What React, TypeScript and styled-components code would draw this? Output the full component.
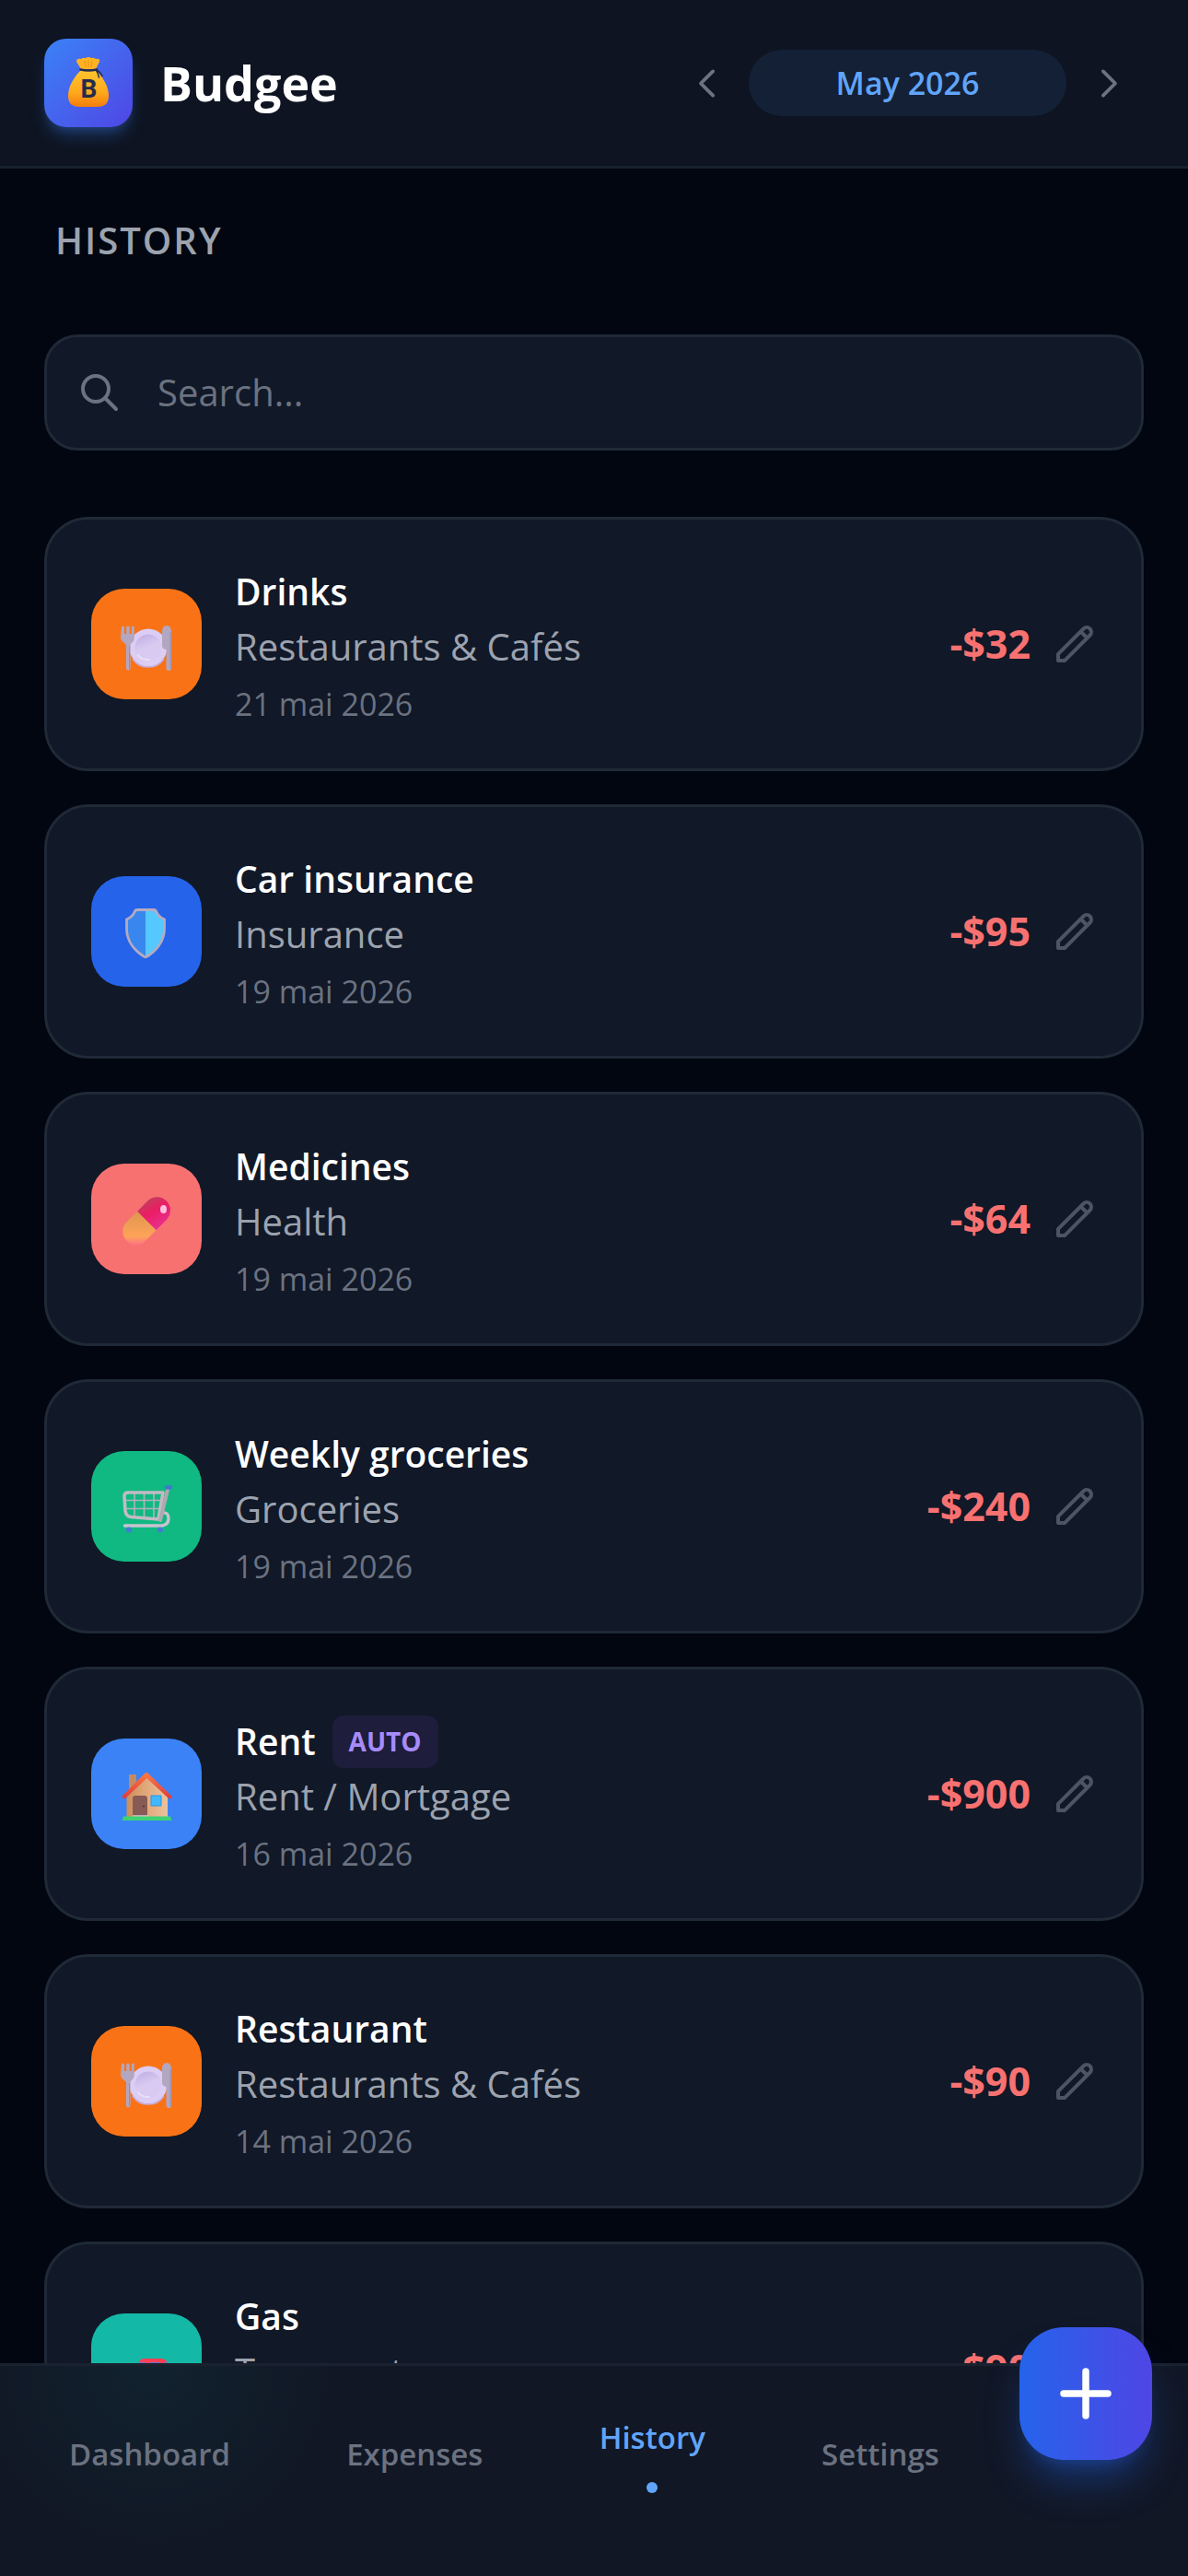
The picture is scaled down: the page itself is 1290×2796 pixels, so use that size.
import React from "react";
import styled, { createGlobalStyle } from "styled-components";

const GlobalStyle = createGlobalStyle`
  *, *::before, *::after { box-sizing: border-box; }
  body {
    margin: 0;
    background: #020610;
    color: #ffffff;
    font-family: "Segoe UI", "Open Sans", "Noto Sans", sans-serif;
  }
  button, input { font: inherit; color: inherit; }
  button { border: 0; padding: 0; background: none; cursor: pointer; }
`;

const Shell = styled.div`
  display: flex;
  flex-direction: column;
  height: 100vh;
`;

const Header = styled.header`
  display: flex;
  align-items: center;
  justify-content: space-between;
  flex: none;
  padding: 42px 48px;
  background: #0e1421;
  border-bottom: 3px solid #17202d;
`;

const Brand = styled.div`
  display: flex;
  align-items: center;
  gap: 30px;
`;

const Logo = styled.div`
  width: 96px;
  height: 96px;
  border-radius: 24px;
  background: linear-gradient(135deg, #3b82f6, #4f46e5);
  box-shadow: 0 12px 18px -3px rgba(59, 130, 246, 0.3),
    0 6px 12px -6px rgba(59, 130, 246, 0.3);
`;

const BrandName = styled.h1`
  margin: 0;
  font-size: 52px;
  line-height: 72px;
  font-weight: 700;
`;

const MonthNav = styled.div`
  display: flex;
  align-items: center;
  gap: 6px;
`;

const StepButton = styled.button`
  display: grid;
  place-items: center;
  width: 78px;
  height: 72px;
  color: #6b7280;
`;

const MonthPill = styled.button`
  width: 345px;
  height: 72px;
  border-radius: 36px;
  background: #142036;
  color: #60a5fa;
  font-size: 34px;
  line-height: 48px;
  font-weight: 600;
`;

const Main = styled.main`
  flex: 1;
  min-height: 0;
  overflow-y: auto;
  scrollbar-width: none;
  padding: 48px;
`;

const SectionTitle = styled.h2`
  margin: 0;
  padding: 0 12px;
  color: #9ca3af;
  font-size: 40px;
  line-height: 60px;
  font-weight: 600;
  letter-spacing: 0.05em;
  text-transform: uppercase;
`;

const SearchBox = styled.label`
  display: flex;
  align-items: center;
  gap: 39px;
  height: 126px;
  margin: 72px 0;
  padding: 0 33px;
  border: 3px solid #1f2937;
  border-radius: 36px;
  background: #111827;
  color: #6b7280;
`;

const SearchInput = styled.input`
  flex: 1;
  min-width: 0;
  padding: 0;
  border: 0;
  outline: 0;
  background: none;
  color: #ffffff;
  font-size: 40px;
  line-height: 60px;
  &::placeholder { color: #6b7280; opacity: 1; }
`;

const List = styled.ul`
  display: flex;
  flex-direction: column;
  gap: 36px;
  margin: 0;
  padding: 0;
  list-style: none;
`;

const Card = styled.li`
  display: flex;
  align-items: center;
  gap: 36px;
  padding: 48px;
  border: 3px solid #1f2937;
  border-radius: 48px;
  background: #111827;
`;

const Tile = styled.div<{ $color: string }>`
  flex: none;
  width: 120px;
  height: 120px;
  border-radius: 36px;
  background: ${(p) => p.$color};
`;

const Details = styled.div`
  flex: 1;
  min-width: 0;
  min-height: 174px;
`;

const TitleRow = styled.div`
  display: flex;
  align-items: center;
  gap: 18px;
  height: 60px;
`;

const Title = styled.span`
  font-size: 39px;
  line-height: 60px;
  font-weight: 600;
`;

const Badge = styled.span`
  padding: 6px 18px;
  border-radius: 12px;
  background: #1e1d3b;
  color: #a78bfa;
  font-size: 28px;
  line-height: 45px;
  font-weight: 700;
`;

const Category = styled.div`
  color: #9ca3af;
  font-size: 40px;
  line-height: 60px;
`;

const DateText = styled.time`
  display: block;
  margin-top: 10px;
  color: #6b7280;
  font-size: 34px;
  line-height: 44px;
`;

const Actions = styled.div`
  display: flex;
  align-items: center;
  gap: 24px;
`;

const Amount = styled.span`
  color: #f87171;
  font-size: 43px;
  line-height: 60px;
  font-weight: 700;
`;

const EditButton = styled.button`
  display: grid;
  color: #4b5563;
`;

const TabBar = styled.nav`
  position: relative;
  flex: none;
  padding: 24px 39px 60px 36px;
  border-top: 3px solid #1a2230;
  background: radial-gradient(circle at 165px 0, rgba(20, 184, 166, 0.07), rgba(20, 184, 166, 0) 200px),
    #111725;
`;

const TabRow = styled.div`
  display: flex;
  align-items: center;
  justify-content: space-between;
  min-height: 144px;
`;

const Tab = styled.a<{ $active?: boolean }>`
  display: flex;
  flex-direction: column;
  align-items: center;
  gap: 24px;
  padding: 0 39px;
  color: ${(p) => (p.$active ? "#60a5fa" : "#6b7280")};
  font-size: 33px;
  line-height: 48px;
  font-weight: 600;
  text-decoration: none;
`;

const Dot = styled.span`
  width: 12px;
  height: 12px;
  border-radius: 50%;
  background: #60a5fa;
`;

const AddButton = styled.button`
  display: grid;
  place-items: center;
  align-self: flex-start;
  flex: none;
  width: 144px;
  height: 144px;
  margin-top: -66px;
  border-radius: 48px;
  background: linear-gradient(90deg, #2563eb, #4f46e5);
  color: #ffffff;
  box-shadow: 0 30px 45px -9px rgba(37, 99, 235, 0.4),
    0 12px 18px -12px rgba(37, 99, 235, 0.4);
`;

function LineIcon({ d, size, weight = 2 }: { d: string; size: number; weight?: number }) {
  return (
    <svg
      width={size}
      height={size}
      viewBox="0 0 24 24"
      fill="none"
      stroke="currentColor"
      strokeWidth={weight}
      strokeLinecap="round"
      strokeLinejoin="round"
      aria-hidden="true"
    >
      <path d={d} />
    </svg>
  );
}

const icons = {
  left: "M15 19l-7-7 7-7",
  right: "M9 5l7 7-7 7",
  search: "M21 21l-6-6m2-5a7 7 0 11-14 0 7 7 0 0114 0z",
  pencil:
    "M15.232 5.232l3.536 3.536m-2.036-5.036a2.5 2.5 0 113.536 3.536L6.5 21.036H3v-3.572L16.732 3.732z",
  plus: "M12 4v16m8-8H4",
};

function MoneyBag() {
  return (
    <svg width="96" height="96" viewBox="0 0 96 96" aria-hidden="true">
      <defs>
        <linearGradient id="bag" x1="0" y1="0" x2="0" y2="1">
          <stop offset="0" stopColor="#ffc62e" />
          <stop offset="0.6" stopColor="#ffa91c" />
          <stop offset="1" stopColor="#f47d0c" />
        </linearGradient>
      </defs>
      <path d="M40 33 35 25Q35 21 40 22Q42 20 45 21Q48 19 51 21Q54 20 56 22Q61 21 60 25L56 33Z" fill="#ffb324" />
      <path d="M44 24l1 7M48 23v8M52 24l-1 7" stroke="#ef9010" strokeWidth="1" />
      <path d="M40 34H56C64 42 70 52 70 62C70 71 65 74 57 74H39C31 74 26 71 26 62C26 52 32 42 40 34Z" fill="url(#bag)" />
      <path d="M39.500 33.500Q48 35.500 57 33.500" fill="none" stroke="#252b4d" strokeWidth="2.600" strokeLinecap="round" />
      <path d="M56.500 34.500Q58.500 37 59.500 42M57 34Q61 36 63 40.500" fill="none" stroke="#252b4d" strokeWidth="1.500" strokeLinecap="round" />
      <text x="48.500" y="64" textAnchor="middle" fontFamily="Roboto, sans-serif" fontSize="28" fontWeight="700" fill="#252b4d">B</text>
    </svg>
  );
}

function Plate() {
  return (
    <svg width="120" height="120" viewBox="0 0 120 120" aria-hidden="true">
      <defs>
        <linearGradient id="dish" x1="0.200" y1="0" x2="0.600" y2="1">
          <stop offset="0" stopColor="#c2aee6" />
          <stop offset="0.500" stopColor="#d8caf0" />
          <stop offset="1" stopColor="#d8caf0" />
        </linearGradient>
      </defs>
      <circle cx="62" cy="64" r="20.500" fill="#dccdf4" />
      <path d="M45 76a20.500 20.500 0 0 0 34 0" fill="none" stroke="#c6aee0" strokeWidth="1.500" />
      <circle cx="62" cy="64" r="14.500" fill="url(#dish)" />
      <path d="M51 72Q55 77.500 63 77" fill="none" stroke="#e8e0f8" strokeWidth="2" strokeLinecap="round" />
      <path d="M33 42q0-1.500 1.500-1.500t1.500 1.500v7h2.200v-7q0-1.500 1.800-1.500t1.800 1.500v7h2v-7q0-1.500 1.500-1.500t1.500 1.500v12q0 3-3 5l-1.200 2v25q0 2.500-2.300 2.500t-2.300-2.500V61l-2-2q-4-3-4-6z" fill="#b3a6c0" />
      <path d="M77 47q0-7 5-7t5 7v39.500q0 2.500-2.700 2.500T81.500 86.500V66Q77 65 77 62z" fill="#b3a6c0" />
      <path d="M86 47v40M41.500 62v25" stroke="#9b8da8" strokeWidth="1" />
    </svg>
  );
}

function Shield() {
  return (
    <svg width="120" height="120" viewBox="0 0 120 120" aria-hidden="true">
      <path d="M59 36.500H50Q48 36.500 47 39Q45 44 39 47V57C39 72 47 81 59 87.500Z" fill="#3987ee" />
      <path d="M59 36.500H68Q70 36.500 71 39Q73 44 79.500 47V57C79.500 72 71 81 59 87.500Z" fill="#55c8ff" />
      <path d="M50 36.500H68Q70 36.500 71 39Q73 44 79.500 47V57C79.500 72 69 82 61 87Q59 88.500 57 87C49 82 38.500 72 38.500 57V47Q45 44 47 39Q48 36.500 50 36.500Z" fill="none" stroke="#b4abc2" strokeWidth="2.800" />
    </svg>
  );
}

function Pill() {
  return (
    <svg width="120" height="120" viewBox="0 0 120 120" aria-hidden="true">
      <defs>
        <linearGradient id="capTop" x1="0.200" y1="0" x2="0.800" y2="1">
          <stop offset="0" stopColor="#b8465a" />
          <stop offset="0.450" stopColor="#ec1d64" />
          <stop offset="1" stopColor="#e6359b" />
        </linearGradient>
        <linearGradient id="capBottom" x1="0" y1="0" x2="0" y2="1">
          <stop offset="0" stopColor="#df9650" />
          <stop offset="0.750" stopColor="#fda358" />
          <stop offset="1" stopColor="#fd7585" />
        </linearGradient>
      </defs>
      <path d="M50 52L61.500 40.300A14.500 14.500 0 0 1 82 60.800L70.500 72.300Z" fill="url(#capTop)" />
      <path d="M50 52L38.300 63.500A14.500 14.500 0 0 0 58.800 84L70.500 72.300Z" fill="url(#capBottom)" />
      <ellipse cx="78.500" cy="49.500" rx="3.500" ry="4.500" fill="#ffc0df" />
    </svg>
  );
}

function Cart() {
  return (
    <svg width="120" height="120" viewBox="0 0 120 120" fill="none" strokeLinecap="round" strokeLinejoin="round" aria-hidden="true">
      <path d="M47 46V70M57.500 46V71M68 46V72M38 53.500H76M39 62.500H75" stroke="#b4b0bd" strokeWidth="1.600" />
      <path d="M77 67Q84 66 84 73T77 81H36.500" stroke="#c9c2d1" strokeWidth="3.400" />
      <path d="M78 45H40Q36 45 36 49L37 65Q38 71 43 71.500L73 74Z" stroke="#c2bbc4" strokeWidth="3.600" />
      <path d="M83 42L75 75" stroke="#aea8b2" strokeWidth="4" />
      <path d="M82 39.500H86" stroke="#4178cf" strokeWidth="4.500" />
      <circle cx="41" cy="85.500" r="3" fill="#427bd2" />
      <circle cx="75" cy="85.500" r="3" fill="#427bd2" />
    </svg>
  );
}

function House() {
  return (
    <svg width="120" height="120" viewBox="0 0 120 120" aria-hidden="true">
      <defs>
        <linearGradient id="wall" x1="0" y1="0" x2="1" y2="0">
          <stop offset="0" stopColor="#c98e5c" />
          <stop offset="0.400" stopColor="#dfa575" />
          <stop offset="1" stopColor="#ecc39d" />
        </linearGradient>
        <linearGradient id="roof" x1="0" y1="0" x2="0" y2="1">
          <stop offset="0" stopColor="#ff7a40" />
          <stop offset="1" stopColor="#dc3b3e" />
        </linearGradient>
      </defs>
      <path d="M41 39H49V56H41Z" fill="#c48a60" />
      <path d="M38.500 60L60 40L83 60V85H38.500Z" fill="url(#wall)" />
      <path d="M45 84V65Q45 62 48 62H58Q61 62 61 65V84Z" fill="#875a54" />
      <circle cx="57" cy="73.500" r="1" fill="#50302f" />
      <path d="M45 84H62" stroke="#d7cbd8" strokeWidth="1.500" />
      <path d="M65 62H76V73H65Z" fill="#42b8fa" stroke="#2598e8" strokeWidth="1" />
      <path d="M34 62L58 38Q60 36 62 38L87 62V65H84L60.500 43L37 65H34Z" fill="url(#roof)" />
      <path d="M35 84.500H86L87.500 89H33.500Z" fill="#3fd175" />
    </svg>
  );
}

function Car() {
  return (
    <svg width="120" height="120" viewBox="0 0 120 120" aria-hidden="true">
      <path d="M51 56Q52 49 58 49H76Q81 49 83 54L87 62V80H34V66Q36 62 47 61Z" fill="#fb4056" />
      <path d="M53 53H59L57 62H49ZM64 53H74V62H64ZM79 53H82L86 62H79Z" fill="#6d6fd0" />
      <circle cx="45" cy="80" r="6" fill="#3a3544" />
      <circle cx="76" cy="80" r="6" fill="#3a3544" />
    </svg>
  );
}

interface Entry {
  title: string;
  category: string;
  date?: string;
  iso?: string;
  amount: string;
  color: string;
  icon: React.ReactNode;
  auto?: boolean;
}

const entries: Entry[] = [
  { title: "Drinks", category: "Restaurants & Cafés", date: "21 mai 2026", iso: "2026-05-21", amount: "-$32", color: "#f97316", icon: <Plate /> },
  { title: "Car insurance", category: "Insurance", date: "19 mai 2026", iso: "2026-05-19", amount: "-$95", color: "#2563eb", icon: <Shield /> },
  { title: "Medicines", category: "Health", date: "19 mai 2026", iso: "2026-05-19", amount: "-$64", color: "#f87171", icon: <Pill /> },
  { title: "Weekly groceries", category: "Groceries", date: "19 mai 2026", iso: "2026-05-19", amount: "-$240", color: "#10b981", icon: <Cart /> },
  { title: "Rent", category: "Rent / Mortgage", date: "16 mai 2026", iso: "2026-05-16", amount: "-$900", color: "#3b82f6", icon: <House />, auto: true },
  { title: "Restaurant", category: "Restaurants & Cafés", date: "14 mai 2026", iso: "2026-05-14", amount: "-$90", color: "#f97316", icon: <Plate /> },
  { title: "Gas", category: "Transport", amount: "-$90", color: "#14b8a6", icon: <Car /> },
];

const tabs = ["Dashboard", "Expenses", "History", "Settings"];

export default function App() {
  return (
    <Shell>
      <GlobalStyle />
      <Header>
        <Brand>
          <Logo><MoneyBag /></Logo>
          <BrandName>Budgee</BrandName>
        </Brand>
        <MonthNav>
          <StepButton aria-label="Previous month"><LineIcon d={icons.left} size={45} /></StepButton>
          <MonthPill>May 2026</MonthPill>
          <StepButton aria-label="Next month"><LineIcon d={icons.right} size={45} /></StepButton>
        </MonthNav>
      </Header>
      <Main>
        <SectionTitle>History</SectionTitle>
        <SearchBox>
          <LineIcon d={icons.search} size={48} />
          <SearchInput type="text" placeholder="Search..." aria-label="Search" />
        </SearchBox>
        <List>
          {entries.map((entry) => (
            <Card key={entry.title}>
              <Tile $color={entry.color}>{entry.icon}</Tile>
              <Details>
                <TitleRow>
                  <Title>{entry.title}</Title>
                  {entry.auto && <Badge>AUTO</Badge>}
                </TitleRow>
                <Category>{entry.category}</Category>
                {entry.date && <DateText dateTime={entry.iso}>{entry.date}</DateText>}
              </Details>
              <Actions>
                <Amount>{entry.amount}</Amount>
                <EditButton aria-label={`Edit ${entry.title}`}><LineIcon d={icons.pencil} size={48} /></EditButton>
              </Actions>
            </Card>
          ))}
        </List>
      </Main>
      <TabBar>
        <TabRow>
          {tabs.map((tab) => (
            <Tab key={tab} href={`#${tab.toLowerCase()}`} $active={tab === "History"}>
              {tab}
              {tab === "History" && <Dot />}
            </Tab>
          ))}
          <AddButton aria-label="Add expense"><LineIcon d={icons.plus} size={72} weight={2.5} /></AddButton>
        </TabRow>
      </TabBar>
    </Shell>
  );
}
